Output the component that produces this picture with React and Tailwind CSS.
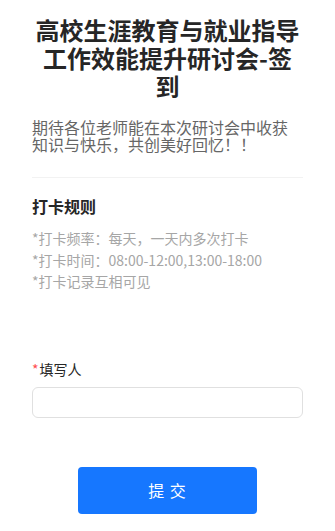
import React from "react";

const rules = [
  "*打卡频率：每天，一天内多次打卡",
  "*打卡时间：08:00-12:00,13:00-18:00",
  "*打卡记录互相可见",
];

export default function App() {
  return (
    <div
      className="min-h-[531px] bg-white px-8 pt-4 pb-4"
      style={{ fontFamily: '"Noto Sans CJK SC", "Noto Sans", sans-serif' }}
    >
      <h1 className="text-center text-[24px] leading-[28px] font-bold text-[#262626]">
        高校生涯教育与就业指导工作效能提升研讨会-签到
      </h1>
      <p className="mt-[19px] text-[16px] leading-[17px] text-[#666]">
        期待各位老师能在本次研讨会中收获知识与快乐，共创美好回忆！！
      </p>
      <div className="mt-6 h-px bg-[#f2f2f2]" />
      <h2 className="mt-[17px] text-[16px] leading-[22px] font-bold text-[#262626]">打卡规则</h2>
      <div className="mt-[11px] text-[14px] leading-[21.5px] text-[#a6a6a6]">
        {rules.map((r) => (
          <div key={r}>{r}</div>
        ))}
      </div>
      <div className="mt-[66px] flex items-center text-[14px] leading-[20px] text-[#262626]">
        <span className="mr-[1px] text-[#ff4d4f]">*</span>
        填写人
      </div>
      <input
        type="text"
        className="mt-2 block h-[31px] w-full rounded-md border border-[#e0e0e0] px-3 text-[14px] outline-none"
      />
      <div className="mt-[49px] flex justify-center">
        <button className="h-[47px] w-[179px] rounded-[4px] bg-[#1677ff] text-[16px] tracking-[1px] text-white">
          提 交
        </button>
      </div>
    </div>
  );
}
